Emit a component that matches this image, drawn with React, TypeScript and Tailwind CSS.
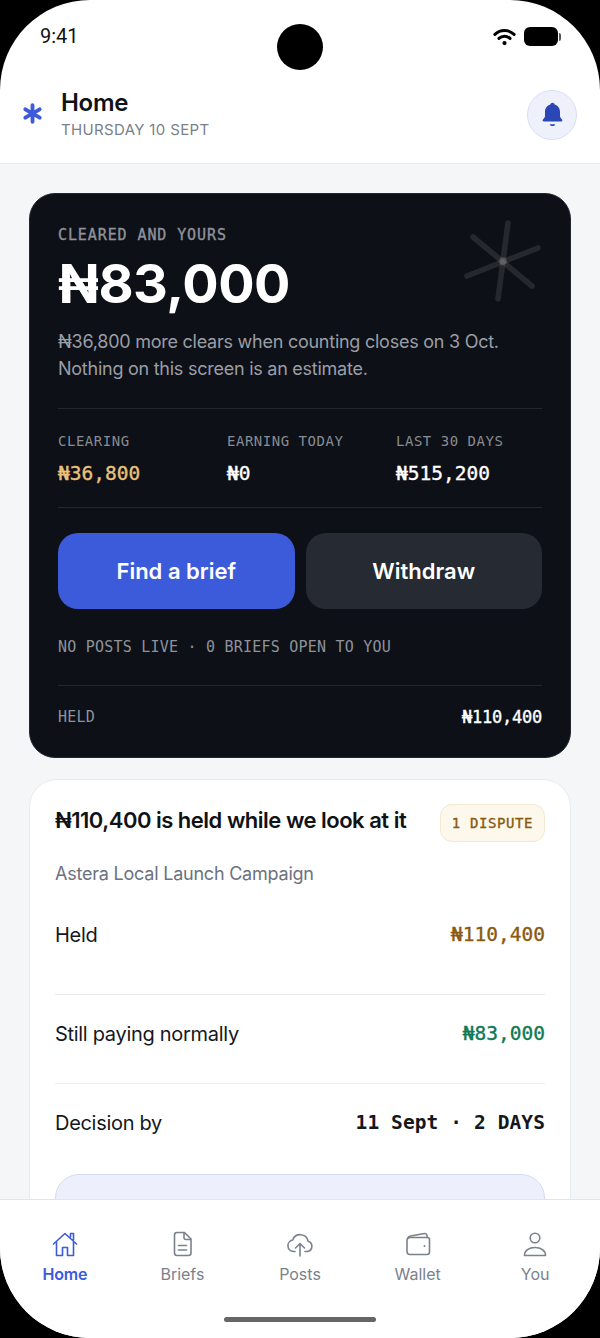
import type { ReactNode } from "react";

const mono = "font-['DejaVu_Sans_Mono',monospace]";
const sans = "font-['Inter',sans-serif]";
const medium = "[-webkit-text-stroke:0.35px_currentColor]";

function Logo() {
  return (
    <svg viewBox="0 0 24 24" className="-mt-[3px] h-[21px] w-[21px] text-[#3b5bdb]" fill="none" stroke="currentColor" strokeWidth={4.4} strokeLinecap="round">
      <path d="M12 2.500v19M3.800 7.200l16.400 9.600M20.200 7.200 3.800 16.800" />
    </svg>
  );
}

function Stat({ label, value, tone }: { label: string; value: string; tone: string }) {
  return (
    <div>
      <p className={`${mono} text-[14px] leading-5 tracking-[0.52px] text-[#878c95]`}>{label}</p>
      <p className={`${mono} ${medium} mt-[11px] text-[19.5px] leading-6 ${tone}`}>{value}</p>
    </div>
  );
}

function Row({ label, children }: { label: string; children: ReactNode }) {
  return (
    <div className="flex items-center justify-between">
      <span className="text-[20px] leading-7 tracking-[-0.3px] text-[#14171c]">{label}</span>
      {children}
    </div>
  );
}

function NavItem({ label, active, children }: { label: string; active?: boolean; children: ReactNode }) {
  return (
    <div className={`flex flex-col items-center ${active ? "text-[#3b5bdb]" : "text-[#7b818c]"}`}>
      <svg viewBox="0 0 28 28" className="h-7 w-7" fill="none" stroke="currentColor" strokeWidth={1.6} strokeLinecap="round" strokeLinejoin="round">
        {children}
      </svg>
      <span className={`mt-[6px] text-[16px] leading-5 ${active ? "font-semibold tracking-[-0.2px]" : ""}`}>{label}</span>
    </div>
  );
}

export default function App() {
  return (
    <div className="h-[1338px] w-[600px] bg-black">
      <div className={`${sans} relative flex h-full flex-col overflow-hidden rounded-[90px] bg-white`}>
        {/* camera */}
        <div className="absolute left-[277px] top-[24px] z-10 h-[46px] w-[46px] rounded-full bg-black" />

        <div className="flex h-[72px] shrink-0 items-start justify-between pl-[40px] pr-[39px] pt-[23px]">
          <span className="font-['Roboto',sans-serif] text-[20px] leading-[26px] text-[#111]">9:41</span>
          <div className="flex items-center gap-[8px] pt-[4px]">
            <svg viewBox="0 0 24 18" className="h-[18px] w-[23px]" fill="none" stroke="#000" strokeWidth={3.1} strokeLinecap="round">
              <path d="M2 6.300a14.500 14.500 0 0 1 20 0M6.200 10.500a8.400 8.400 0 0 1 11.600 0" />
              <circle cx="12" cy="15.300" r="2.200" fill="#000" stroke="none" />
            </svg>
            <div className="flex items-center gap-[1px]">
              <div className="h-[19px] w-[34px] rounded-[6px] bg-black" />
              <div className="h-[8px] w-[2px] rounded-r-sm bg-[#555]" />
            </div>
          </div>
        </div>

        <header className="flex h-[92px] shrink-0 items-center justify-between border-b border-[#e9ebef] pl-[22px] pr-[23px]">
          <div className="-mt-[6px] flex items-center gap-[18px]">
            <Logo />
            <div className="-mt-[1px]">
              <h1 className="text-[24px] font-semibold leading-[30px] tracking-[-0.3px] text-[#101216]">Home</h1>
              <p className="mt-[2px] text-[15px] leading-5 tracking-[0.35px] text-[#7a7f88]">THURSDAY 10 SEPT</p>
            </div>
          </div>
          <div className="-mt-[6px] flex h-[50px] w-[50px] items-center justify-center rounded-full border border-[#d9ddf3] bg-[#eef0fb]">
            <svg viewBox="0 0 24 24" className="h-[29px] w-[29px]" fill="#2b46b5">
              <path d="M12 2.200c.9 0 1.600.6 1.800 1.500 2.700.8 4.400 3.200 4.400 6v3.500c0 1.100.9 2 1.700 3 .6.7.2 1.600-.7 1.600H4.800c-.9 0-1.300-.9-.7-1.600.8-1 1.700-1.900 1.700-3V9.700c0-2.800 1.700-5.200 4.400-6 .2-.9.9-1.500 1.800-1.500Z" />
              <path d="M9.700 20h4.600c-.3 1-1.200 1.600-2.300 1.600s-2-.6-2.300-1.600Z" />
            </svg>
          </div>
        </header>

        <main className="min-h-0 flex-1 overflow-hidden bg-[#f4f6f8] px-[29px] pt-[29px]">
          <section className="relative rounded-[26px] border border-[#23272e] bg-[#0d1016] px-[28px] pb-[28px] pt-[31px]">
            <svg viewBox="0 0 90 90" className="absolute right-[22px] top-[22px] h-[90px] w-[90px]" fill="none" stroke="#fff" strokeOpacity={0.1} strokeWidth={5.6} strokeLinecap="round">
              <path d="M50 7 40 83" />
              <path d="M80 32 9 60" />
              <path d="M15 21 74 70" />
              <circle cx="45" cy="45" r="4" fill="#fff" fillOpacity={0.1} stroke="none" />
            </svg>
            <p className={`${mono} ${medium} text-[15px] leading-5 tracking-[0.9px] text-[#8e939b]`}>CLEARED AND YOURS</p>
            <p className="mt-[9px] text-[54px] font-bold leading-[60px] tracking-[-0.5px] text-white">₦83,000</p>
            <p className="mt-[14px] text-[18px] leading-[27px] tracking-[-0.25px] text-[#9a9ea6]">
              ₦36,800 more clears when counting closes on 3 Oct.
              <br />
              Nothing on this screen is an estimate.
            </p>

            <div className="mt-[26px] grid grid-cols-[169px_169px_1fr] border-y border-[#23272e] pb-[21px] pt-[22px]">
              <Stat label="CLEARING" value="₦36,800" tone="text-[#e9c17a]" />
              <Stat label="EARNING TODAY" value="₦0" tone="text-white" />
              <Stat label="LAST 30 DAYS" value="₦515,200" tone="text-white" />
            </div>

            <div className="mt-[25px] flex gap-[11px]">
              <button className="h-[76px] flex-1 rounded-[20px] bg-[#3b5bdb] text-[22px] font-semibold text-white">Find a brief</button>
              <button className="h-[76px] flex-1 rounded-[20px] bg-[#262a32] text-[22px] font-semibold text-white">Withdraw</button>
            </div>

            <p className={`${mono} mt-[28px] text-[15px] leading-5 tracking-[0.22px] text-[#8e939b]`}>NO POSTS LIVE · 0 BRIEFS OPEN TO YOU</p>

            <div className="mt-[28px] flex items-center justify-between border-t border-[#23272e] pt-[19px]">
              <span className={`${mono} text-[15px] leading-5 tracking-[0.22px] text-[#8e939b]`}>HELD</span>
              <span className={`${mono} ${medium} text-[17px] leading-6 tracking-[-0.25px] text-white`}>₦110,400</span>
            </div>
          </section>

          <section className="mt-[21px] rounded-t-[28px] border border-[#e8eaee] bg-white px-[25px] pt-[24px]">
            <div className="flex items-start justify-between">
              <h2 className="mt-[1px] text-[22px] font-semibold leading-[30px] tracking-[-0.5px] text-[#101216]">₦110,400 is held while we look at it</h2>
              <span className={`${mono} ${medium} flex h-[38px] w-[105px] items-center justify-center rounded-[12px] border border-[#f3e8d0] bg-[#fdf8ec] text-[14px] tracking-[0.6px] text-[#8a5a10]`}>1 DISPUTE</span>
            </div>
            <p className="mt-[19px] text-[18px] leading-[26px] tracking-[-0.22px] text-[#6b7280]">Astera Local Launch Campaign</p>

            <div className="mt-[34px] border-b border-[#e9ebef] pb-[45px]">
              <Row label="Held">
                <span className={`${mono} ${medium} text-[19.5px] leading-7 text-[#8a5a10]`}>₦110,400</span>
              </Row>
            </div>
            <div className="border-b border-[#e9ebef] pb-[35px] pt-[25px]">
              <Row label="Still paying normally">
                <span className={`${mono} ${medium} text-[19.5px] leading-7 text-[#0f7a55]`}>₦83,000</span>
              </Row>
            </div>
            <div className="pt-[25px]">
              <Row label="Decision by">
                <span className={`${mono} text-[19.5px] font-bold leading-7 tracking-[0.1px] text-[#14171c]`}>11 Sept · 2 DAYS</span>
              </Row>
            </div>
            <div className="mt-[37px] h-[120px] rounded-t-[24px] border border-[#d5dbf0] bg-[#edf0fc]" />
          </section>
        </main>

        <nav className="relative z-10 h-[139px] shrink-0 border-t border-[#e1e4ea] bg-white px-[6px] pt-[30px]">
          <div className="grid grid-cols-5">
            <NavItem label="Home" active>
              <path d="M2.500 14 14 3.500 25.500 14M5.500 12v13.500h6v-8h5v8h6V12M19.500 7V3.500h3V10" />
            </NavItem>
            <NavItem label="Briefs">
              <path d="M9 2.500h7.500L23 9v14a2.500 2.500 0 0 1-2.500 2.500H9A2.500 2.500 0 0 1 6.500 23V5A2.500 2.500 0 0 1 9 2.500Z" />
              <path d="M16 3v4.500A2 2 0 0 0 18 9.500h4.500M10.500 15.500h8M10.500 20h8" />
            </NavItem>
            <NavItem label="Posts">
              <path d="M9 21.500H7.500a5.800 5.800 0 0 1-.8-11.500 8 8 0 0 1 15.400 1.200 5.300 5.300 0 0 1-.6 10.300H19" />
              <path d="M14 26V13.500M9.500 18l4.500-4.500 4.500 4.500" />
            </NavItem>
            <NavItem label="Wallet">
              <path d="M3 10.500A3 3 0 0 1 6 7.500h17.500a2 2 0 0 1 2 2V22a2.500 2.500 0 0 1-2.500 2.500H6A3 3 0 0 1 3 21.500V10.500Z" />
              <path d="M3.500 8.500c.5-1.300 1.500-2.200 3-2.500l14-2.500c1.500-.2 2.500.8 2.500 2.500V7.500" />
              <circle cx="20.500" cy="16" r="1" fill="currentColor" stroke="none" />
            </NavItem>
            <NavItem label="You">
              <circle cx="14" cy="8" r="4.800" />
              <path d="M3.500 25.500c0-5 4.500-8 10.500-8s10.500 3 10.500 8H3.500Z" />
            </NavItem>
          </div>
          <div className="mx-auto mt-[33px] h-[5px] w-[152px] rounded-full bg-[#666]" />
        </nav>
      </div>
    </div>
  );
}
